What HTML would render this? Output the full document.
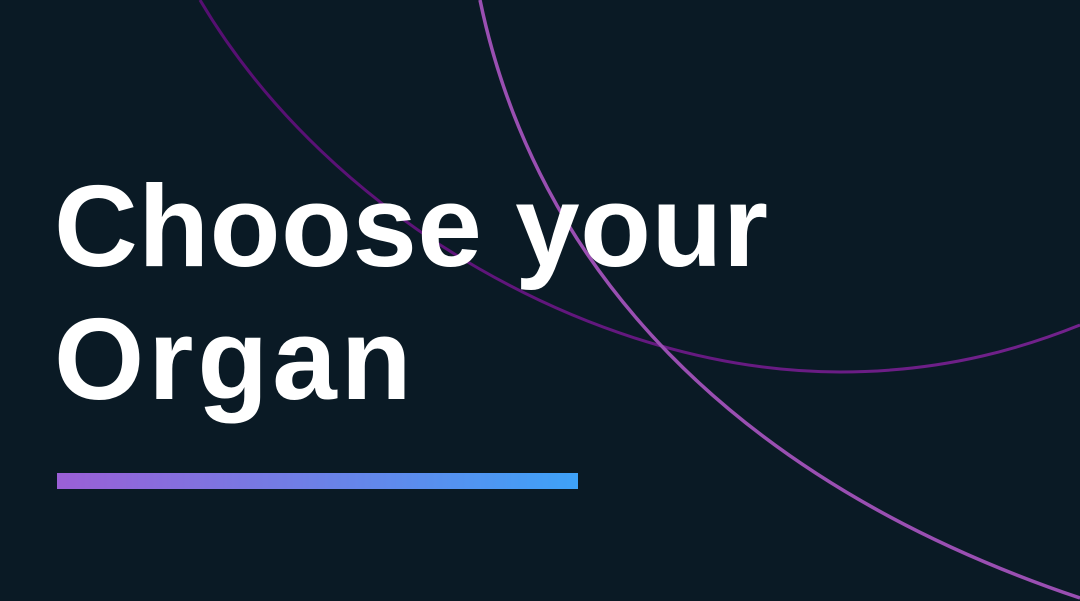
<!DOCTYPE html>
<html><head><style>
html,body{margin:0;padding:0;}
body{width:1080px;height:601px;background:#0a1a25;position:relative;overflow:hidden;font-family:"Liberation Sans",sans-serif;}
svg{position:absolute;left:0;top:0;}
.t{position:absolute;left:54px;color:#fff;font-weight:bold;font-size:116px;line-height:1;white-space:nowrap;letter-spacing:0.5px;}
.bar{position:absolute;left:57px;top:473px;width:521px;height:16px;background:linear-gradient(90deg,#9b5fd6,#3ea2f8);}
</style></head><body>
<svg width="1080" height="601">
<defs><linearGradient id="g" x1="0" x2="1"><stop offset="0" stop-color="#560f72"/><stop offset="1" stop-color="#72228c"/></linearGradient></defs>
<path d="M200,0 C330,220 600,372 840,372 C950,372 1030,345 1080,325" fill="none" stroke="url(#g)" stroke-width="3"/>
<path d="M480,0 C535,265 730,480 1080,598" fill="none" stroke="#9a4fb2" stroke-width="3.5"/>
</svg>
<div class="t" style="top:168px">Choose your</div>
<div class="t" style="top:301px;letter-spacing:4px">Organ</div>
<div class="bar"></div>
</body></html>
